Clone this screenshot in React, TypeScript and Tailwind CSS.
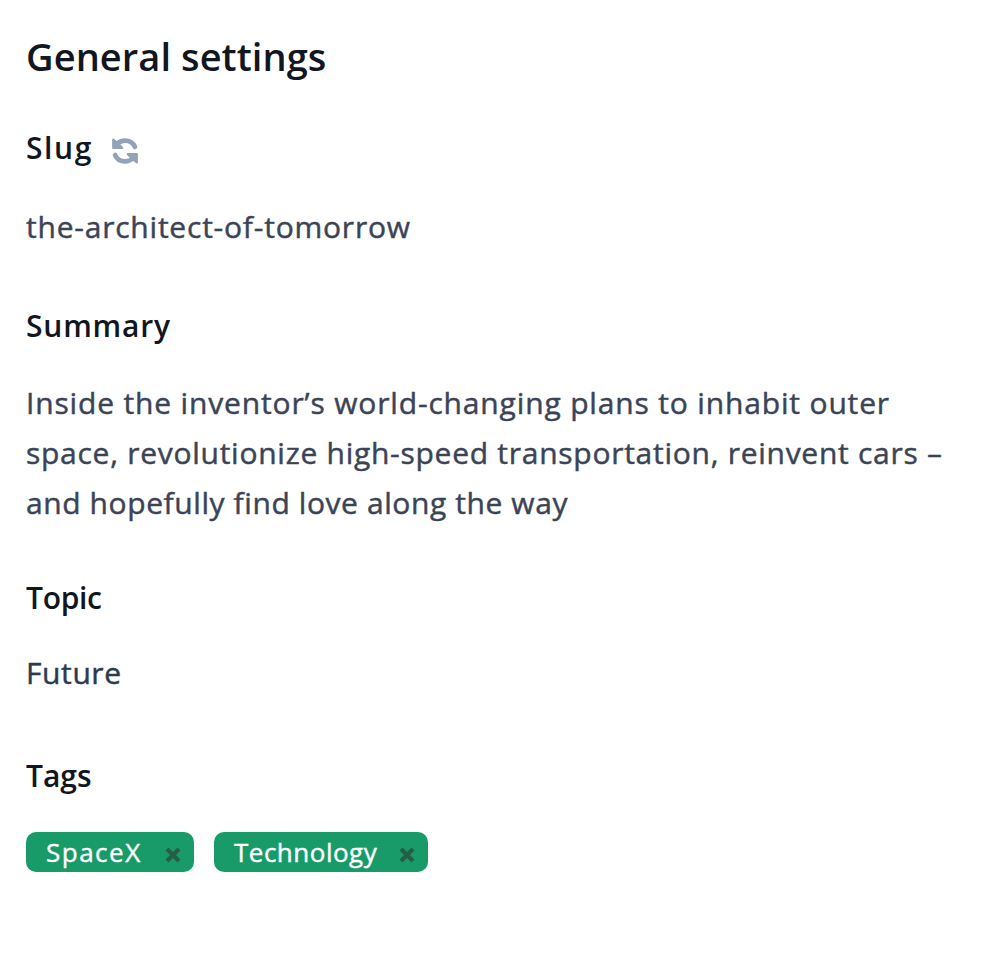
import React from "react";

const label = "h-10 text-[30px] leading-10 font-semibold text-[#111620] whitespace-nowrap";
const body = "text-[30px] text-[#3b4456] whitespace-nowrap [-webkit-text-stroke:0.45px_#3b4456]";

function Refresh() {
  const half = (
    <>
      <path d="M23 9C21.3 5 17.5 2.6 13 2.6C9.8 2.6 7 3.8 5 6" fill="none" stroke="currentColor" strokeWidth="4.6" strokeLinecap="round" />
      <path d="M1.2 1.6V10H10.2L8.8 8.3L3.3 3.4Z" fill="currentColor" stroke="currentColor" strokeWidth="2.2" strokeLinejoin="round" />
    </>
  );
  return (
    <svg className="mt-[10px] ml-[20px] size-[26px] overflow-visible text-[#93a2b9]" viewBox="0 0 26 26">
      {half}
      <g transform="rotate(180 13 13)">{half}</g>
    </svg>
  );
}

function Cross() {
  return (
    <svg className="mt-[5px] mr-px size-4 shrink-0" viewBox="0 0 16 16" fill="none" stroke="#255e45" strokeWidth="4.2">
      <path d="M2 2L14 14M14 2L2 14" />
    </svg>
  );
}

function Tag({ children, className }: { children: React.ReactNode; className: string }) {
  return (
    <div className={`flex h-10 items-center justify-between rounded-[10px] bg-[#189b69] pr-3 pl-5 text-[26px] leading-10 text-white [-webkit-text-stroke:0.4px_white] ${className}`}>
      {children}
      <Cross />
    </div>
  );
}

export default function App() {
  return (
    <main className="flex h-[958px] w-[984px] flex-col bg-white pl-[26px] font-['Open_Sans',sans-serif]">
      <h1 className="mt-[31px] h-[50px] text-[38px] leading-[50px] font-semibold text-[#111620] whitespace-nowrap"><span className="tracking-[0.08px]">General settings</span></h1>
      <div className="mt-[47px] flex">
        <h2 className={`w-[66px] ${label}`}><span className="tracking-[1.6px]">Slug</span></h2>
        <Refresh />
      </div>
      <p className={`mt-[34px] h-[50px] leading-[50px] ${body}`}><span className="tracking-[0.78px]">the-architect-of-tomorrow</span></p>
      <h2 className={`mt-[54px] ${label}`}><span className="tracking-[0.8px]">Summary</span></h2>
      <p className={`mt-[32px] leading-[50px] ${body}`}>
        <span className="block"><span className="tracking-[0.84px]">Inside the inventor’s world-changing plans to inhabit outer</span></span>
        <span className="block"><span className="tracking-[0.73px]">space, revolutionize high-speed transportation, reinvent cars –</span></span>
        <span className="block"><span className="tracking-[0.59px]">and hopefully find love along the way</span></span>
      </p>
      <h2 className={`mt-[50px] ${label}`}><span className="tracking-[-0.3px]">Topic</span></h2>
      <p className="mt-[35px] h-10 text-[30px] leading-10 text-[#2b3a4e] [-webkit-text-stroke:0.45px_#2b3a4e]"><span className="tracking-[0.6px]">Future</span></p>
      <h2 className={`mt-[63px] ${label}`}><span className="tracking-[0px]">Tags</span></h2>
      <div className="mt-[36px] flex gap-5">
        <Tag className="w-[168px]"><span className="tracking-[1.5px]">SpaceX</span></Tag>
        <Tag className="w-[214px]"><span className="tracking-[0.5px]">Technology</span></Tag>
      </div>
    </main>
  );
}
